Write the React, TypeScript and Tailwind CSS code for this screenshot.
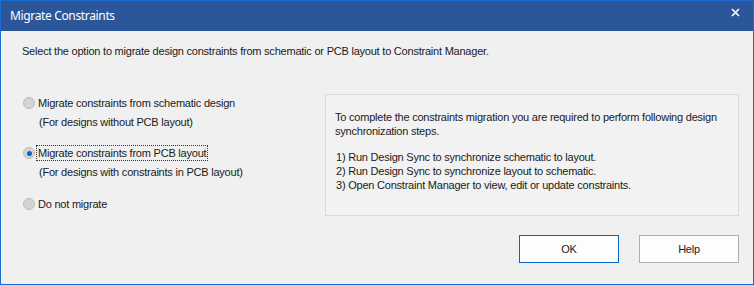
import React from "react";

function Radio({ checked }: { checked?: boolean }) {
  return (
    <span className="relative flex h-[12px] w-[12px] shrink-0 items-center justify-center rounded-full border border-[#bcbcbc] bg-[#d4d4d4]">
      {checked && <span className="h-[5px] w-[5px] rounded-full bg-[#0a64d2]" />}
    </span>
  );
}

export default function App() {
  return (
    <div
      className="flex h-[285px] w-[754px] flex-col border border-[#1c6bd0] bg-[#f0f0f0] text-[11px] leading-[14px] tracking-[-0.22px] text-[#1a1a1a]"
      style={{ fontFamily: '"Liberation Sans", Arial, sans-serif' }}
    >
      <div className="flex h-[30px] shrink-0 items-center justify-between bg-[#2b579a] pl-[9px] pr-[13px]">
        <span
          className="text-[12px] tracking-[-0.35px] text-white"
          style={{ fontFamily: '"Noto Sans", "Open Sans", sans-serif' }}
        >
          Migrate Constraints
        </span>
        <svg width="9" height="9" viewBox="0 0 9 9" className="mb-[8px]">
          <path d="M1 1 L8 8 M8 1 L1 8" stroke="white" strokeWidth="1.6" />
        </svg>
      </div>

      <div className="flex flex-1 flex-col pl-[21px] pr-[14px] pt-[13px]">
        <div>Select the option to migrate design constraints from schematic or PCB layout to Constraint Manager.</div>

        <div className="mt-[36px] flex">
          <div className="flex w-[302px] flex-col pt-[2px]">
            <div className="flex items-center">
              <span className="ml-[1px]">
                <Radio />
              </span>
              <span className="ml-[3px]">Migrate constraints from schematic design</span>
            </div>
            <div className="ml-[17px] mt-[5px]">(For designs without PCB layout)</div>

            <div className="mt-[16px] flex items-center">
              <span className="ml-[1px]">
                <Radio checked />
              </span>
              <span className="ml-[1px] border border-dotted border-[#333] px-[1px] leading-[14px]">
                Migrate constraints from PCB layout
              </span>
            </div>
            <div className="ml-[17px] mt-[4px]">(For designs with constraints in PCB layout)</div>

            <div className="mt-[18px] flex items-center">
              <span className="ml-[1px]">
                <Radio />
              </span>
              <span className="ml-[3px]">Do not migrate</span>
            </div>
          </div>

          <div className="ml-[1px] h-[122px] w-[414px] border border-[#dadada] bg-[#f2f2f2] pl-[9px] pt-[15px]">
            <div>
              To complete the constraints migration you are required to perform following design
              <br />
              synchronization steps.
            </div>
            <div className="mt-[12px] pl-[1px]">
              1) Run Design Sync to synchronize schematic to layout.
              <br />
              2) Run Design Sync to synchronize layout to schematic.
              <br />
              3) Open Constraint Manager to view, edit or update constraints.
            </div>
          </div>
        </div>

        <div className="mt-[19px] flex justify-end gap-[20px]">
          <button className="h-[28px] w-[100px] border border-[#0a64c8] bg-[#fdfdfd] text-[11px] text-[#1a1a1a]">
            OK
          </button>
          <button className="h-[28px] w-[100px] border border-[#adadad] bg-[#fdfdfd] text-[11px] text-[#1a1a1a]">
            Help
          </button>
        </div>
      </div>
    </div>
  );
}
